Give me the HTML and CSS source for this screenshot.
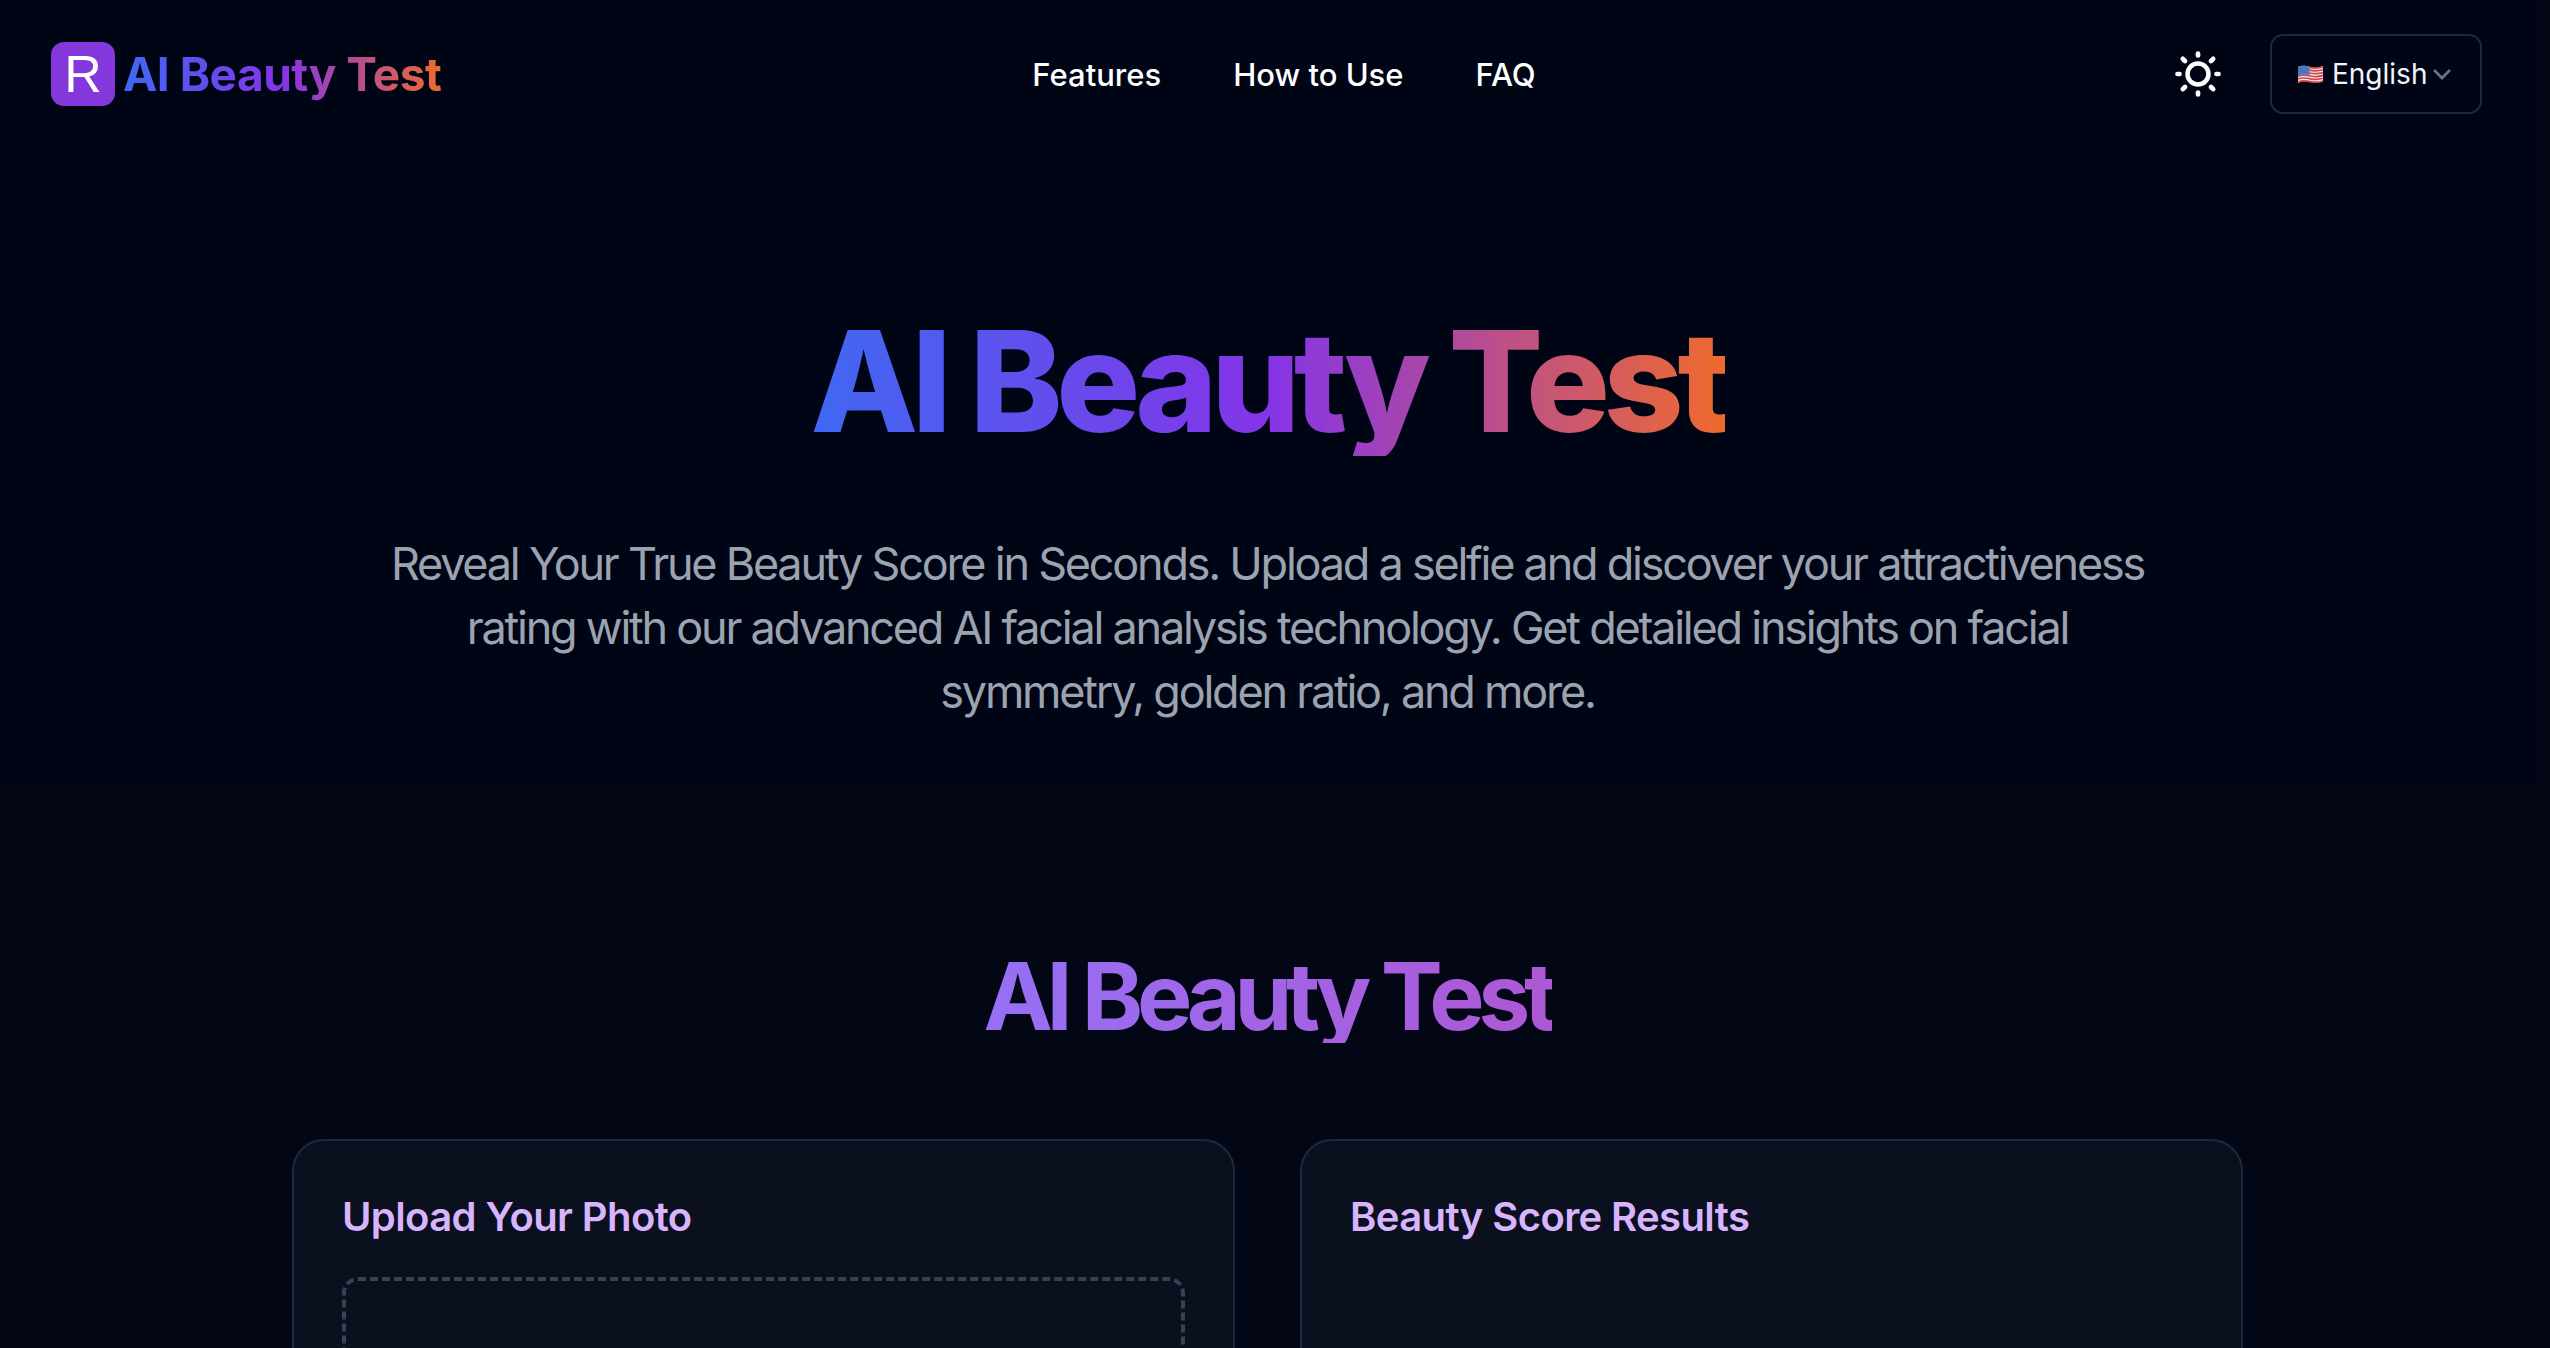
FILE: index.html
```html
<!DOCTYPE html>
<html lang="en">
<head>
    <meta charset="UTF-8">
    <meta name="viewport" content="width=device-width, initial-scale=1.0">
    <title>AI Beauty Test</title>
    <link rel="stylesheet" href="styles.css">
</head>
<body>

    <header class="site-header">
        <a class="brand" href="#">
            <span class="brand-mark">R</span>
            <span class="brand-name gradient-text">AI Beauty Test</span>
        </a>
        <nav class="main-nav">
            <a href="#">Features</a>
            <a href="#">How to Use</a>
            <a href="#">FAQ</a>
        </nav>
        <div class="header-actions">
            <button class="theme-btn" aria-label="Toggle theme">
                <svg width="46" height="46" viewBox="0 0 46 46" fill="none" stroke="#fff" stroke-linecap="round">
                    <circle cx="23" cy="23" r="10.500" stroke-width="4.500"/>
                    <path stroke-width="4.700" d="M23 2.500v2M23 41.500v2M2.500 23h2M41.500 23h2M7.800 7.800l2.200 2.200M36 36l2.200 2.200M7.800 38.200l2.200-2.200M36 10l2.200-2.200"/>
                </svg>
            </button>
            <button class="lang-btn">
                <svg class="flag" width="25" height="20" viewBox="0 0 25 20">
                    <path fill="#eef0f4" d="M0 3c4-2 8-1 12.500 0s8 1 12.500-1v15c-4 2-8 2-12.500 1s-8.500-1-12.500 1z"/>
                    <path fill="none" stroke="#d8434a" stroke-width="1.700" d="M11 3.400c5 1 9 1.300 14-.5M11 6.200c5 1 9 1.300 14-.5M11 9c5 1 9 1.300 14-.5M0 12.200c4-1.500 8-1.200 12.500-.2s8 1 12.500-.6M0 15c4-1.500 8-1.200 12.500-.2s8 1 12.500-.6M0 17.800c4-1.500 8-1.200 12.500-.2s8 1 12.500-.6"/>
                    <path fill="#4a78c0" d="M0 3c4-2 8-1 11.500-.2v8.300c-4-.8-8-.9-11.500.5z"/>
                </svg>
                <span>English</span>
                <svg class="chevron" width="20" height="12" viewBox="0 0 20 12" fill="none" stroke="#6b7280" stroke-width="2.800">
                    <path d="M2 2l8 8 8-8"/>
                </svg>
            </button>
        </div>
    </header>

    <section class="hero">
        <h1 class="gradient-text">AI Beauty Test</h1>
        <p>Reveal Your True Beauty Score in Seconds. Upload a selfie and discover your attractiveness rating with our advanced AI facial analysis technology. Get detailed insights on facial symmetry, golden ratio, and more.</p>
    </section>

    <section class="tool">
        <h2>AI Beauty Test</h2>
        <div class="tool-grid">
            <div class="card">
                <h3>Upload Your Photo</h3>
                <div class="dropzone"></div>
            </div>
            <div class="card">
                <h3>Beauty Score Results</h3>
            </div>
        </div>
    </section>

</body>
</html>
```

FILE: styles.css
```css
html {
    overflow: hidden;
    background-color: #030614;
}

body {
    margin: 0;
    width: 2535px;
    height: 1348px;
    overflow: hidden;
    background-color: #030614;
    color: #fff;
    font-family: Inter, "Noto Sans", sans-serif;
}

a {
    color: inherit;
    text-decoration: none;
}

.gradient-text {
    background: linear-gradient(90deg, #3f68f2 0%, #8534e8 50%, #ef6a2e 100%);
    -webkit-background-clip: text;
    background-clip: text;
    color: transparent;
}

.site-header {
    display: grid;
    grid-template-columns: 1fr auto 1fr;
    align-items: center;
    height: 148px;
    padding: 0 53px 0 51px;
    background-color: #000516;
}

.brand {
    display: flex;
    align-items: center;
    gap: 8px;
}

.brand-mark {
    display: flex;
    align-items: center;
    justify-content: center;
    width: 64px;
    height: 64px;
    border-radius: 13px;
    background-color: #8338dc;
    font-family: "Liberation Sans", Arial, sans-serif;
    font-size: 52px;
}

.brand-name {
    font-size: 46px;
    font-weight: 700;
    letter-spacing: -0.5px;
}

.main-nav {
    display: flex;
    gap: 72px;
    margin-left: 35px;
    font-size: 31px;
    font-weight: 500;
}

.header-actions {
    display: flex;
    align-items: center;
    justify-content: flex-end;
    gap: 49px;
}

.theme-btn {
    display: flex;
    padding: 0;
    border: none;
    background: none;
}

.lang-btn {
    display: flex;
    align-items: center;
    gap: 5px;
    width: 212px;
    height: 80px;
    padding: 0 0 0 26px;
    border: 2px solid #1e293b;
    border-radius: 13px;
    background: none;
    color: #f1f5f9;
    font-family: inherit;
    font-size: 28px;
}

.flag {
    margin-right: 4px;
}

.hero {
    display: flex;
    flex-direction: column;
    align-items: center;
    height: 638px;
    background-color: #000516;
    text-align: center;
}

.hero h1 {
    margin: 158px 0 0;
    font-size: 140px;
    font-weight: 800;
    line-height: 150px;
    letter-spacing: -6.4px;
}

.hero p {
    width: 1780px;
    margin: 76px 0 0;
    color: #9ca3af;
    font-size: 45px;
    line-height: 64px;
    letter-spacing: -2.24px;
}

.tool {
    padding: 0 292px;
}

.tool h2 {
    width: fit-content;
    margin: 164px auto 0;
    background: linear-gradient(90deg, #9670f5, #ad58d4);
    -webkit-background-clip: text;
    background-clip: text;
    color: transparent;
    font-size: 93px;
    font-weight: 700;
    line-height: 93px;
    letter-spacing: -6.4px;
    text-align: center;
}

.tool-grid {
    display: grid;
    grid-template-columns: 1fr 1fr;
    gap: 65px;
    margin-top: 96px;
}

.card {
    height: 600px;
    box-sizing: border-box;
    padding: 48px;
    border: 2px solid #1e293b;
    border-radius: 32px;
    background-color: #0a101d;
}

.card h3 {
    margin: 0;
    color: #d8b4fe;
    font-size: 40px;
    font-weight: 600;
    line-height: 56px;
    letter-spacing: -0.6px;
}

.dropzone {
    height: 400px;
    margin-top: 32px;
    border: 4px dashed #374151;
    border-radius: 16px;
}
```
